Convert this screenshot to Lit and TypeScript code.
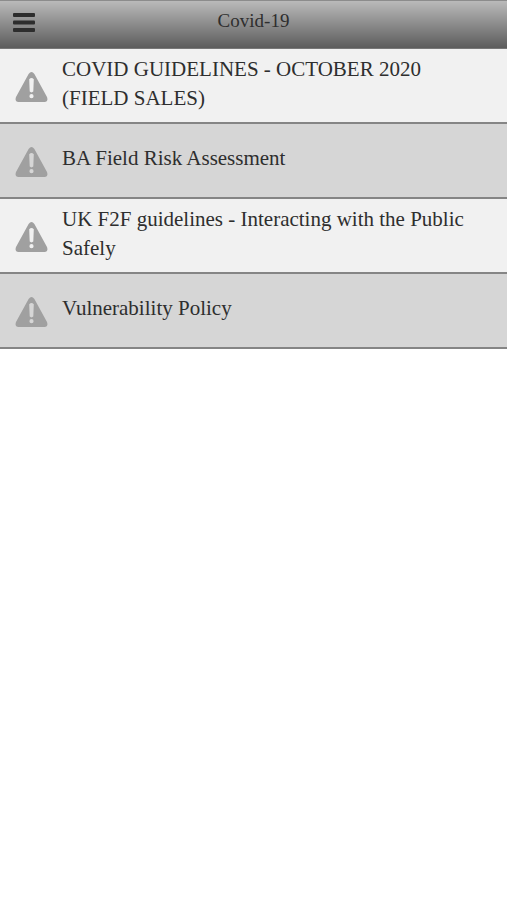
import { LitElement, html, css } from "lit";
import { customElement } from "lit/decorators.js";

const documents = [
  "COVID GUIDELINES - OCTOBER 2020 (FIELD SALES)",
  "BA Field Risk Assessment",
  "UK F2F guidelines - Interacting with the Public Safely",
  "Vulnerability Policy",
];

@customElement("app-root")
export class AppRoot extends LitElement {
  static styles = css`
    :host {
      display: block;
      min-height: 100vh;
      background: #fff;
      color: #2e2e2e;
      font-family: "Liberation Serif", serif;
    }
    header {
      display: grid;
      grid-template-columns: 48px 1fr 48px;
      align-items: center;
      height: 49px;
      box-sizing: border-box;
      padding-bottom: 4px;
      border-top: 1px solid #8c8c8c;
      border-bottom: 1px solid #777;
      background: linear-gradient(#bababa, #5c5c5c);
    }
    .menu {
      display: flex;
      justify-content: center;
      padding: 0;
      border: 0;
      background: none;
      color: #2d2d2d;
    }
    h1 {
      margin: 0;
      padding-bottom: 4px;
      font-size: 19px;
      line-height: 24px;
      font-weight: 400;
      text-align: center;
    }
    ul {
      margin: 0;
      padding: 0;
      list-style: none;
    }
    li {
      border-bottom: 2px solid #858585;
      background: #f1f1f1;
    }
    li:nth-child(even) {
      background: #d6d6d6;
    }
    a {
      display: flex;
      align-items: center;
      gap: 14px;
      min-height: 73px;
      padding: 0 16px 0 15px;
      color: inherit;
      text-decoration: none;
    }
    .warning {
      flex: none;
      margin-top: 2px;
      fill: #a0a0a0;
    }
    .label {
      padding-bottom: 4px;
      font-size: 21px;
      line-height: 29px;
    }
  `;

  render() {
    return html`
      <header>
        <button class="menu" aria-label="Menu">
          <svg width="22" height="20" viewBox="0 0 22 20" fill="currentColor" aria-hidden="true">
            <rect width="22" height="4" rx="1" />
            <rect y="7.5" width="22" height="4" rx="1" />
            <rect y="15" width="22" height="4" rx="1" />
          </svg>
        </button>
        <h1>Covid-19</h1>
      </header>
      <ul>
        ${documents.map(
          (name) => html`<li>
            <a href="#">
              <svg class="warning" width="33" height="30" viewBox="0 0 33 30" aria-hidden="true">
                <path
                  fill-rule="evenodd"
                  d="M13.6 2Q16.5-1.8 19.4 2L32 25Q33.6 29.5 29.5 30H3.5Q-.6 29.5 1 25ZM14.2 7.2L14.7 19.6Q16.5 21.2 18.3 19.6L18.8 7.2Q16.5 4.8 14.2 7.2ZM14.4 24.2a2.1 2.1 0 1 0 4.2 0a2.1 2.1 0 1 0-4.2 0Z"
                />
              </svg>
              <span class="label">${name}</span>
            </a>
          </li>`
        )}
      </ul>
    `;
  }
}
